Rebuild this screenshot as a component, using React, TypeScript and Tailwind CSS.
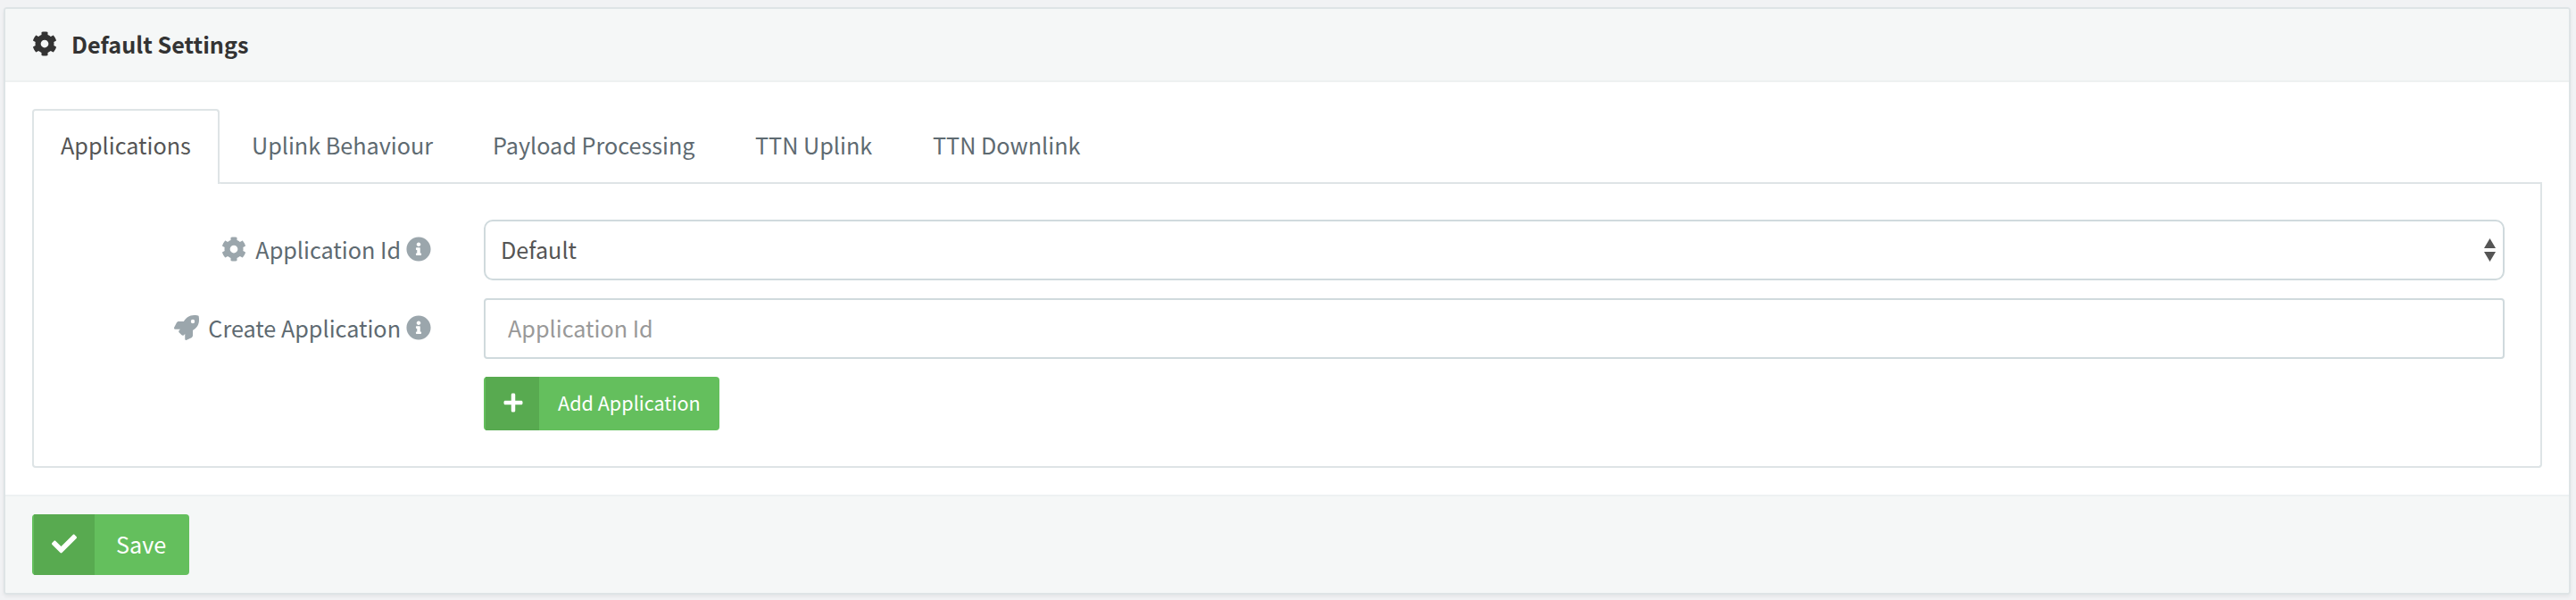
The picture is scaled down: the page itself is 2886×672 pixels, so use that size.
import type { ReactNode } from "react";
import { FaCheck, FaCog, FaInfoCircle, FaPlus, FaRocket } from "react-icons/fa";

const tabs = [
  { label: "Uplink Behaviour", width: "w-[270px]" },
  { label: "Payload Processing", width: "w-[294px]" },
  { label: "TTN Uplink", width: "w-[199px]" },
  { label: "TTN Downlink", width: "w-[232px]" },
];

function Label({ icon, children }: { icon: ReactNode; children: ReactNode }) {
  return (
    <label className="flex h-[68px] w-[425px] shrink-0 items-center justify-end text-[#5e6a71]">
      {icon}
      <span className="pb-[3px] whitespace-nowrap">{children}</span>
      <FaInfoCircle className="relative -top-px ml-[6px] size-7 text-[#9ba6ac]" />
    </label>
  );
}

export default function App() {
  return (
    <div className="h-[672px] bg-[#f1f2f4] px-1 pt-2 font-['Noto_Sans_CJK_SC',sans-serif] text-[25.2px] leading-[40px] text-[#555]">
      <section className="mr-[2px] h-[658px] overflow-hidden rounded-[4px] border-2 border-[#dee4e6] bg-white shadow-[0_2px_4px_rgba(0,0,0,0.06)]">
        <header className="flex h-[82px] items-center border-b-2 border-[#eef1f1] bg-[#f5f7f7] pl-[30px] text-[#333]">
          <FaCog className="relative -top-[1px] size-7" />
          <h2 className="ml-4 pb-[3px] font-bold">Default Settings</h2>
        </header>

        <div className="h-[462px] px-[30px] pt-[30px]">
          <nav className="flex h-[84px] items-stretch">
            <button className="h-[84px] w-[210px] rounded-t-[4px] border-2 border-b-0 border-[#dee4e6] bg-white pb-[6px] pl-[30px] text-left">
              Applications
            </button>
            <div className="-ml-[2px] flex flex-1 rounded-bl-[4px] border-b-2 border-[#dee4e6] pl-[38px] text-[#5e6a71]">
              {tabs.map((tab) => (
                <button key={tab.label} className={`${tab.width} pb-[2px] text-left whitespace-nowrap`}>
                  {tab.label}
                </button>
              ))}
            </div>
          </nav>

          <div className="flex h-[318px] flex-col gap-5 rounded-b-[4px] border-2 border-t-0 border-[#dee4e6] pt-10 pr-10 pl-5">
            <div className="flex">
              <Label icon={<FaCog className="relative -top-px mr-[10px] size-7 text-[#9ba6ac]" />}>Application Id</Label>
              <div className="relative ml-[59px] flex-1">
                <select className="h-[68px] w-full appearance-none rounded-[10px] border-2 border-[#d0dadd] bg-white pb-[3px] pl-[17px]">
                  <option>Default</option>
                </select>
                <svg className="absolute top-[21px] right-[10px] h-[26px] w-[13px]" viewBox="0 0 13 26" fill="#555">
                  <path d="M6.5 0L13 11H0ZM0 15H13L6.5 26Z" />
                </svg>
              </div>
            </div>
            <div className="flex">
              <Label icon={<FaRocket className="relative -top-px mr-[10px] size-7 text-[#9ba6ac]" />}>Create Application</Label>
              <input
                placeholder="Application Id"
                className="ml-[59px] h-[68px] min-w-0 flex-1 rounded-[4px] border-2 border-[#d0dadd] pb-[3px] pl-[25px] placeholder:text-[#999]"
              />
            </div>
            <button className="ml-[484px] flex h-[60px] w-[264px] items-center overflow-hidden rounded-[4px] bg-[#64bf5d] pl-[2px] text-[21.6px] text-white">
              <span className="flex h-full w-[60px] items-center justify-center bg-[#58aa50] pb-[2px] pl-[2px]">
                <FaPlus className="size-6" />
              </span>
              <span className="ml-[21px] pb-[2px] whitespace-nowrap">Add Application</span>
            </button>
          </div>
        </div>

        <footer className="flex h-[110px] items-start border-t-2 border-[#eef1f2] bg-[#f5f7f7] pt-5 pl-[30px]">
          <button className="flex h-[68px] w-[176px] items-center overflow-hidden rounded-[4px] bg-[#64bf5d] pl-[2px] text-white">
            <span className="flex h-full w-[68px] items-center justify-center bg-[#58aa50] pb-[2px]">
              <FaCheck className="size-7" />
            </span>
            <span className="ml-[24px] pb-[3px]">Save</span>
          </button>
        </footer>
      </section>
    </div>
  );
}
